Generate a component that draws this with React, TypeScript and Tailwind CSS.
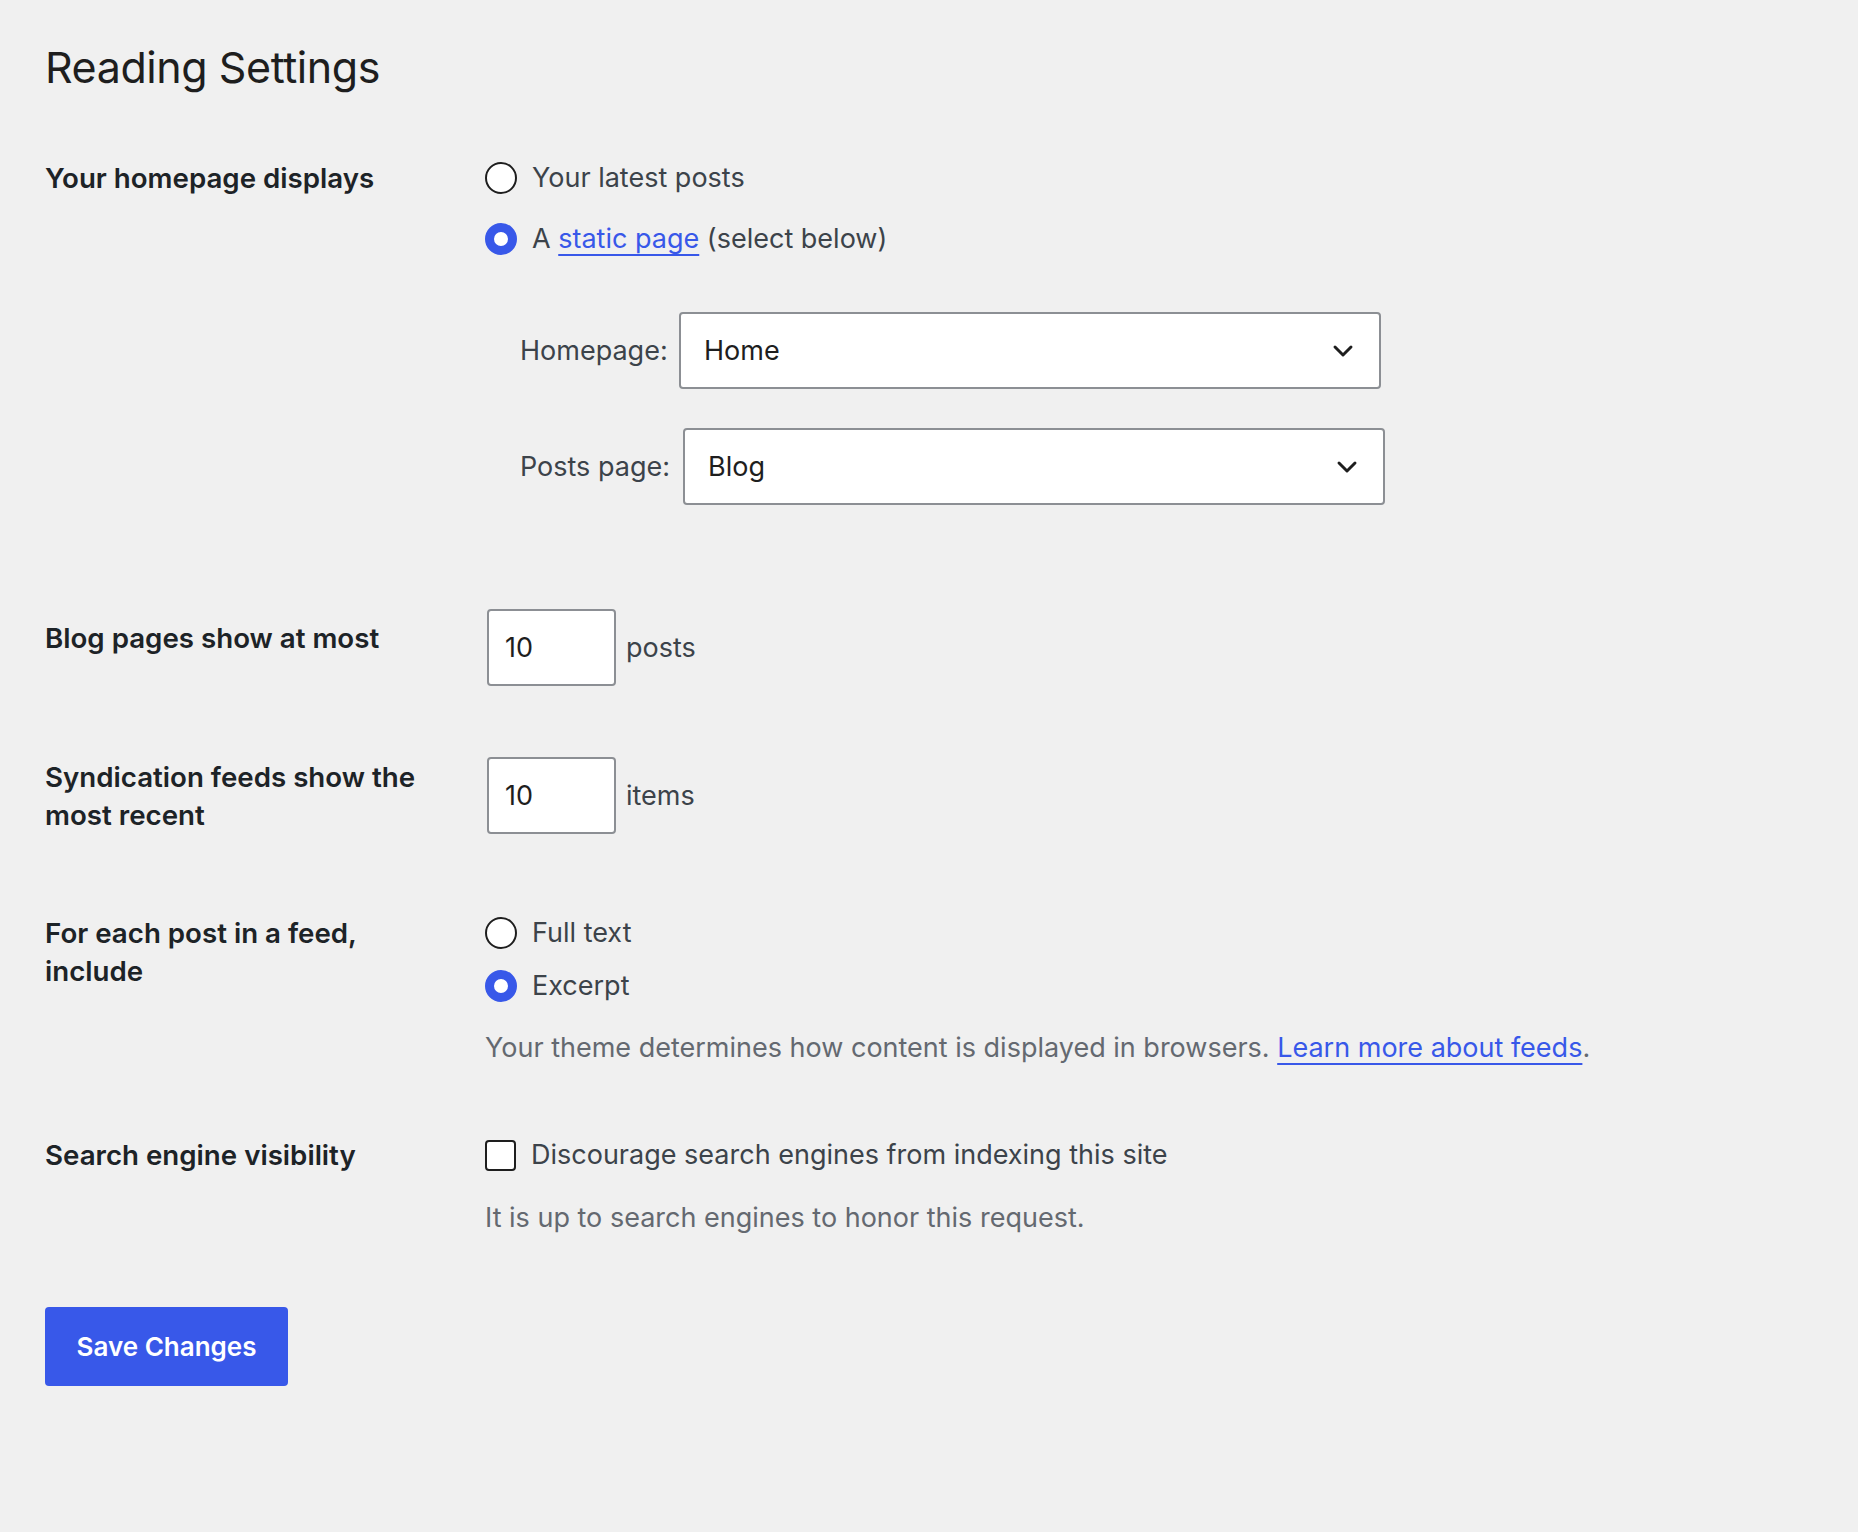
import { ChevronDown } from "lucide-react";

function Radio({ checked, label }: { checked?: boolean; label: React.ReactNode }) {
  return (
    <label className="flex h-[38px] items-center gap-[15px] text-[#3c434a]">
      <span
        className={
          checked
            ? "box-border size-[32px] shrink-0 rounded-full border-[9px] border-[#3858e9] bg-white"
            : "box-border size-[32px] shrink-0 rounded-full border-2 border-[#1e1e1e] bg-white"
        }
      />
      <span>{label}</span>
    </label>
  );
}

function Select({ label, value, labelWidth }: { label: string; value: string; labelWidth: string }) {
  return (
    <div className="flex items-center">
      <span className={`${labelWidth} shrink-0 text-[#3c434a]`}>{label}</span>
      <div className="flex h-[77px] w-[702px] items-center justify-between rounded-[4px] border-2 border-[#8c8f94] bg-white pl-[23px] pr-[20px] text-[#1e1e1e]">
        <span>{value}</span>
        <ChevronDown className="size-[32px]" strokeWidth={2.2} />
      </div>
    </div>
  );
}

function NumberBox({ value, unit }: { value: string; unit: string }) {
  return (
    <div className="flex items-center gap-[10px]">
      <div className="flex h-[77px] w-[129px] items-center rounded-[4px] border-2 border-[#8c8f94] bg-white pl-[16px] text-[#1e1e1e]">
        {value}
      </div>
      <span className="text-[#3c434a]">{unit}</span>
    </div>
  );
}

export default function App() {
  return (
    <div className="min-h-screen bg-[#f0f0f0] px-[45px] pt-[37px] pb-[140px] font-['Inter','Liberation_Sans',sans-serif] text-[27px] leading-[38px] text-[#1e1e1e]">
      <h1 className="text-[43px] leading-[60px] font-normal tracking-[-0.01em] text-[#1e1e1e]">Reading Settings</h1>

      {/* homepage displays */}
      <div className="mt-[62px] flex">
        <div className="w-[440px] shrink-0 text-[27.7px] font-semibold text-[#1d2327]">Your homepage displays</div>
        <div className="flex flex-col">
          <Radio label="Your latest posts" />
          <div className="mt-[23px]">
            <Radio
              checked
              label={
                <>
                  A{" "}
                  <a href="#" className="text-[#3858e9] underline decoration-2 underline-offset-[6px]">
                    static page
                  </a>{" "}
                  (select below)
                </>
              }
            />
          </div>
          <div className="mt-[54px] ml-[35px] flex flex-col gap-[39px]">
            <Select label="Homepage:" value="Home" labelWidth="w-[159px]" />
            <Select label="Posts page:" value="Blog" labelWidth="w-[163px]" />
          </div>
        </div>
      </div>

      {/* blog pages */}
      <div className="mt-[104px] flex">
        <div className="w-[442px] shrink-0 pt-[10px] text-[27.7px] font-semibold text-[#1d2327]">Blog pages show at most</div>
        <NumberBox value="10" unit="posts" />
      </div>

      {/* syndication */}
      <div className="mt-[71px] flex">
        <div className="w-[442px] shrink-0 pt-[1px] text-[27.7px] font-semibold text-[#1d2327]">
          Syndication feeds show the
          <br />
          most recent
        </div>
        <NumberBox value="10" unit="items" />
      </div>

      {/* feed include */}
      <div className="mt-[80px] flex">
        <div className="w-[440px] shrink-0 text-[27.7px] font-semibold text-[#1d2327]">
          For each post in a feed,
          <br />
          include
        </div>
        <div className="flex flex-col">
          <Radio label="Full text" />
          <div className="mt-[15px]">
            <Radio checked label="Excerpt" />
          </div>
          <p className="mt-[24px] text-[#646970]">
            Your theme determines how content is displayed in browsers.{" "}
            <a href="#" className="text-[#3858e9] underline decoration-2 underline-offset-[6px]">
              Learn more about feeds
            </a>
            .
          </p>
        </div>
      </div>

      {/* search engine */}
      <div className="mt-[69px] flex">
        <div className="w-[440px] shrink-0 text-[27.7px] font-semibold text-[#1d2327]">Search engine visibility</div>
        <div className="flex flex-col">
          <label className="flex h-[38px] items-center gap-[15px] text-[#3c434a]">
            <span className="box-border size-[31px] shrink-0 rounded-[4px] border-2 border-[#1e1e1e] bg-white" />
            <span>Discourage search engines from indexing this site</span>
          </label>
          <p className="mt-[25px] text-[#646970]">It is up to search engines to honor this request.</p>
        </div>
      </div>

      <button className="mt-[70px] h-[79px] w-[243px] rounded-[4px] bg-[#3858e9] text-[26px] font-semibold text-white">
        Save Changes
      </button>
    </div>
  );
}
